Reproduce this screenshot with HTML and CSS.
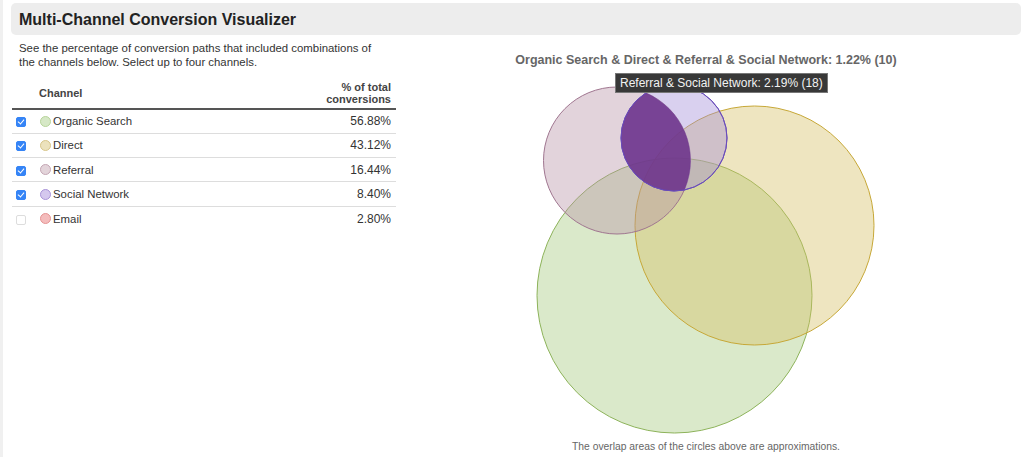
FILE: index.html
```html
<!DOCTYPE html>
<html lang="en">
<head>
	<meta charset="UTF-8">
	<title>Multi-Channel Conversion Visualizer</title>
	<link rel="stylesheet" href="styles.css">
</head>
<body>
<div class="page">
	<header class="bar">
		<h1>Multi-Channel Conversion Visualizer</h1>
	</header>
	<div class="main">
		<!-- 左侧：渠道列表 -->
		<section class="side">
			<p class="intro">See the percentage of conversion paths that included combinations of the channels below. Select up to four channels.</p>
			<table class="channels">
				<thead>
				<tr>
					<th class="name">Channel</th>
					<th class="pct">% of total<br>conversions</th>
				</tr>
				</thead>
				<tbody>
				<tr>
					<td><div class="cell"><span class="box on"></span><span class="dot green"></span>Organic Search</div></td>
					<td class="pct">56.88%</td>
				</tr>
				<tr>
					<td><div class="cell"><span class="box on"></span><span class="dot yellow"></span>Direct</div></td>
					<td class="pct">43.12%</td>
				</tr>
				<tr>
					<td><div class="cell"><span class="box on"></span><span class="dot pink"></span>Referral</div></td>
					<td class="pct">16.44%</td>
				</tr>
				<tr>
					<td><div class="cell"><span class="box on"></span><span class="dot purple"></span>Social Network</div></td>
					<td class="pct">8.40%</td>
				</tr>
				<tr>
					<td><div class="cell"><span class="box"></span><span class="dot red"></span>Email</div></td>
					<td class="pct">2.80%</td>
				</tr>
				</tbody>
			</table>
		</section>
		<!-- 右侧：韦恩图 -->
		<section class="chart">
			<p class="chart-title">Organic Search &amp; Direct &amp; Referral &amp; Social Network: 1.22% (10)</p>
			<div class="venn">
				<svg width="620" height="373" viewBox="0 0 620 373">
					<defs>
						<clipPath id="clipRef">
							<circle cx="221" cy="93.5" r="73.5"/>
						</clipPath>
					</defs>
					<circle cx="278.5" cy="228.5" r="137.5" fill="#a3c77a" fill-opacity=".4" stroke="#8db35a"/>
					<circle cx="358.5" cy="158.5" r="119.5" fill="#d4bf62" fill-opacity=".4" stroke="#c7a838"/>
					<circle cx="221" cy="93.5" r="73.5" fill="#b792a5" fill-opacity=".4" stroke="#a07690"/>
					<circle cx="278" cy="71" r="53" fill="#a08ad8" fill-opacity=".4" stroke="#6a4dbb"/>
					<circle cx="278" cy="71" r="53" clip-path="url(#clipRef)" fill="#6a2f88" fill-opacity=".85"/>
					<circle cx="278" cy="71" r="53" fill="none" stroke="#6a4dbb"/>
				</svg>
				<div class="tip">Referral &amp; Social Network: 2.19% (18)</div>
			</div>
			<p class="note">The overlap areas of the circles above are approximations.</p>
		</section>
	</div>
</div>
</body>
</html>
```

FILE: styles.css
```css
* {
	box-sizing: border-box;
}

body,
p,
h1 {
	margin: 0;
}

body {
	background: #fff;
	font-family: "Liberation Sans", Arial, sans-serif;
	color: #333;
}

.page {
	height: 457px;
	padding: 3px 3px 0 8px;
	border-left: 3px solid #f0f0f0;
}

/* 顶部标题条 */
.bar {
	height: 32px;
	padding-left: 8px;
	background: #ededed;
	border-radius: 5px;
}

.bar h1 {
	font-size: 16px;
	line-height: 33px;
	font-weight: bold;
	color: #222;
}

.main {
	display: flex;
}

/* 左侧列表 */
.side {
	width: 384px;
	margin-left: 1px;
}

.intro {
	margin-top: 6px;
	padding: 0 18px 0 7px;
	font-size: 11.4px;
	line-height: 14px;
}

.channels {
	width: 100%;
	margin-top: 12px;
	border-collapse: collapse;
	font-size: 11.4px;
}

.channels th {
	padding: 0 5px 3px;
	border-bottom: 2px solid #555;
	font-size: 11px;
	line-height: 12px;
	font-weight: bold;
	color: #444;
	text-align: left;
}

.channels th.name {
	padding-left: 27px;
}

.channels th.pct {
	text-align: right;
}

.channels td {
	height: 24.33px;
	padding: 0;
	border-bottom: 1px solid #ddd;
	color: #333;
}

.channels tr:last-child td {
	border-bottom: none;
}

.channels td.pct {
	padding-right: 5px;
	font-size: 12px;
	text-align: right;
}

.cell {
	display: flex;
	align-items: center;
	padding-left: 4px;
}

/* 复选框 */
.box {
	width: 10px;
	height: 10px;
	margin: 2px 14px 0 0;
	border: 1px solid #ddd;
	border-radius: 2px;
	background: #fff;
}

.box.on {
	position: relative;
	border-color: #3584f6;
	background: #3584f6;
}

.box.on:after {
	content: "";
	position: absolute;
	left: 2px;
	top: 0;
	width: 3px;
	height: 5px;
	border: solid #fff;
	border-width: 0 1.5px 1.5px 0;
	transform: rotate(40deg);
}

.dot {
	width: 11px;
	height: 11px;
	margin-right: 2px;
	border-radius: 50%;
	border: 1px solid;
}

.dot.green {
	background: #d6e8c6;
	border-color: #b7d49a;
}

.dot.yellow {
	background: #ece2bd;
	border-color: #d8c68a;
}

.dot.pink {
	background: #e3d4da;
	border-color: #c4a6b4;
}

.dot.purple {
	background: #d5c8ee;
	border-color: #a993d8;
}

.dot.red {
	background: #f4bcbc;
	border-color: #e59393;
}

/* 右侧图表 */
.chart {
	flex: 1;
	padding: 18px 5px 0 0;
	text-align: center;
}

.chart-title {
	font-size: 12.5px;
	line-height: 14px;
	font-weight: bold;
	color: #666;
}

.venn {
	position: relative;
	height: 373px;
}

.venn svg {
	display: block;
}

.tip {
	position: absolute;
	left: 219px;
	top: 6px;
	height: 20px;
	padding: 0 4px;
	border: 1px solid #777;
	background: #383838;
	font-size: 12px;
	line-height: 18px;
	color: #f2f2f2;
	white-space: nowrap;
}

.note {
	font-size: 10.3px;
	line-height: 13px;
	color: #666;
}
```
